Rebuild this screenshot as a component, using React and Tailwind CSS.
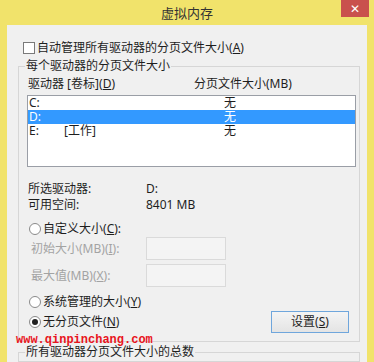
const font = { fontFamily: '"Noto Sans", "Noto Sans CJK SC", sans-serif' };

function Key({ k }) {
  return (
    <>
      (<span className="underline underline-offset-1">{k}</span>)
    </>
  );
}

function Radio({ checked }) {
  return (
    <span className="w-[12px] h-[12px] rounded-full border border-[#8a8a8a] bg-white flex items-center justify-center shrink-0">
      {checked && <span className="w-[6px] h-[6px] rounded-full bg-[#222]" />}
    </span>
  );
}

const drives = [
  { d: 'C:', label: '', size: '无' },
  { d: 'D:', label: '', size: '无', sel: true },
  { d: 'E:', label: '[工作]', size: '无' },
];

export default function App() {
  return (
    <div
      className="relative w-[374px] h-[362px] overflow-hidden bg-[#f1e36b] text-[12px] leading-[16px] text-[#1e1e1e]"
      style={font}
    >
      <div className="h-[25px] flex items-center justify-center text-[13px] text-[#333]">
        虚拟内存
      </div>
      <div className="absolute top-0 right-[5px] w-[28px] h-[17px] bg-[#c9514d] flex items-center justify-center text-white text-[12px] leading-none">
        ✕
      </div>

      <div className="mx-[7px] h-[337px] bg-[#f0f0f0] flex flex-col">
        <div className="mt-[16px] h-[13px] pl-[16px] flex items-center gap-[2px]">
          <span className="w-[12px] h-[12px] border border-[#7a7a7a] bg-white shrink-0" />
          <span>
            自动管理所有驱动器的分页文件大小<Key k="A" />
          </span>
        </div>

        <fieldset className="mt-[4px] ml-[11px] mr-[7px] border border-[#d6d6d6] pb-[8px]">
          <legend className="ml-[6px] px-[1px]">每个驱动器的分页文件大小</legend>

          <div className="mt-[2px] h-[16px] pl-[9px] flex">
            <span className="w-[166px]">
              驱动器 [卷标]<Key k="D" />
            </span>
            <span>分页文件大小(MB)</span>
          </div>

          <div className="mt-[3px] ml-[8px] w-[329px] h-[72px] border border-[#9a9ea6] bg-white">
            {drives.map((r) => (
              <div
                key={r.d}
                className={
                  'h-[14px] leading-[14px] flex items-center pl-[1px] ' +
                  (r.sel ? 'bg-[#3399ff] text-white' : '')
                }
              >
                <span className="w-[35px]">{r.d}</span>
                <span className="w-[160px]">{r.label}</span>
                <span>{r.size}</span>
              </div>
            ))}
          </div>

          <div className="mt-[14px] pl-[9px] flex h-[16px]">
            <span className="w-[118px]">所选驱动器:</span>
            <span>D:</span>
          </div>
          <div className="pl-[9px] flex h-[16px]">
            <span className="w-[118px]">可用空间:</span>
            <span>8401 MB</span>
          </div>

          <div className="mt-[8px] pl-[10px] h-[16px] flex items-center gap-[2px]">
            <Radio />
            <span>
              自定义大小<Key k="C" />:
            </span>
          </div>

          <div className="pl-[12px] h-[23px] flex items-center text-[#a3a3a3]">
            <span className="w-[115px]">
              初始大小(MB)<Key k="I" />:
            </span>
            <span className="w-[80px] h-[23px] border border-[#dadada] bg-[#f4f4f4]" />
          </div>
          <div className="mt-[4px] pl-[12px] h-[23px] flex items-center text-[#a3a3a3]">
            <span className="w-[115px]">
              最大值(MB)<Key k="X" />:
            </span>
            <span className="w-[80px] h-[23px] border border-[#dadada] bg-[#f4f4f4]" />
          </div>

          <div className="mt-[7px] pl-[10px] h-[16px] flex items-center gap-[2px]">
            <Radio />
            <span>
              系统管理的大小<Key k="Y" />
            </span>
          </div>
          <div className="mt-[1px] pl-[10px] pr-[10px] h-[22px] flex items-center justify-between">
            <div className="flex items-center gap-[2px]">
              <Radio checked />
              <span>
                无分页文件<Key k="N" />
              </span>
            </div>
            <button className="w-[78px] h-[22px] border border-[#6fa6dc] bg-gradient-to-b from-[#f4f4f4] to-[#e4e4e4]">
              设置<Key k="S" />
            </button>
          </div>
        </fieldset>

        <fieldset className="mt-[2px] ml-[11px] mr-[7px] h-[40px] border border-[#d6d6d6]">
          <legend className="ml-[6px] px-[1px]">所有驱动器分页文件大小的总数</legend>
        </fieldset>
      </div>

      <div
        className="absolute left-[16px] top-[334px] text-[12px] leading-[13px] font-bold text-[#e8141c]"
        style={{ fontFamily: '"Liberation Mono", monospace' }}
      >
        www.qinpinchang.com
      </div>
    </div>
  );
}
